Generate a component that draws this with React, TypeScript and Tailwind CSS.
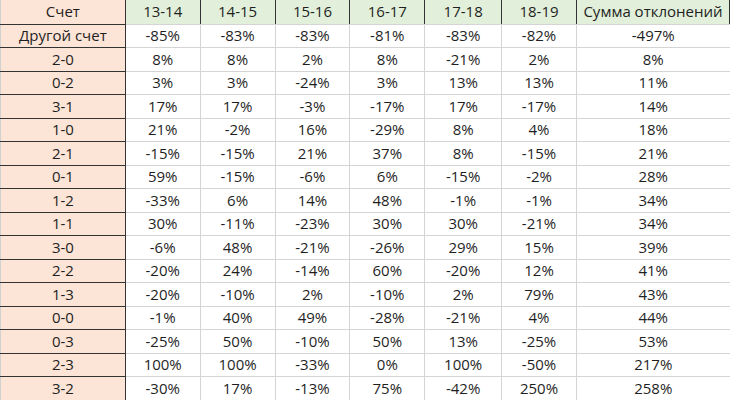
import React from "react";

const seasons = ["13-14", "14-15", "15-16", "16-17", "17-18", "18-19"];

const rows: [string, string[], string][] = [
  ["Другой счет", ["-85%", "-83%", "-83%", "-81%", "-83%", "-82%"], "-497%"],
  ["2-0", ["8%", "8%", "2%", "8%", "-21%", "2%"], "8%"],
  ["0-2", ["3%", "3%", "-24%", "3%", "13%", "13%"], "11%"],
  ["3-1", ["17%", "17%", "-3%", "-17%", "17%", "-17%"], "14%"],
  ["1-0", ["21%", "-2%", "16%", "-29%", "8%", "4%"], "18%"],
  ["2-1", ["-15%", "-15%", "21%", "37%", "8%", "-15%"], "21%"],
  ["0-1", ["59%", "-15%", "-6%", "6%", "-15%", "-2%"], "28%"],
  ["1-2", ["-33%", "6%", "14%", "48%", "-1%", "-1%"], "34%"],
  ["1-1", ["30%", "-11%", "-23%", "30%", "30%", "-21%"], "34%"],
  ["3-0", ["-6%", "48%", "-21%", "-26%", "29%", "15%"], "39%"],
  ["2-2", ["-20%", "24%", "-14%", "60%", "-20%", "12%"], "41%"],
  ["1-3", ["-20%", "-10%", "2%", "-10%", "2%", "79%"], "43%"],
  ["0-0", ["-1%", "40%", "49%", "-28%", "-21%", "4%"], "44%"],
  ["0-3", ["-25%", "50%", "-10%", "50%", "13%", "-25%"], "53%"],
  ["2-3", ["100%", "100%", "-33%", "0%", "100%", "-50%"], "217%"],
  ["3-2", ["-30%", "17%", "-13%", "75%", "-42%", "250%"], "258%"],
];

const widths = ["w-[125px]", "w-[75px]", "w-[75px]", "w-[75px]", "w-[75px]", "w-[77px]", "w-[75px]", "w-[153px]"];

export default function App() {
  return (
    <div className="w-[730px] h-[400px] overflow-hidden bg-white">
      <table
        className="table-fixed border-collapse text-center text-[15px] text-[#1f1f1f]"
        style={{ fontFamily: '"Open Sans", "Liberation Sans", sans-serif' }}
      >
        <colgroup>
          {widths.map((w, i) => (
            <col key={i} className={w} />
          ))}
        </colgroup>
        <thead>
          <tr className="h-[24px]">
            <th className="font-normal bg-[#fce4d6] border-l border-l-[#d0d0d0] border-r border-r-[#333] border-b border-b-[#333] leading-none">
              Счет
            </th>
            {seasons.map((s) => (
              <th
                key={s}
                className="font-normal bg-[#e2efda] border-r border-r-[#333] border-b border-b-[#d4d4d4] leading-none"
              >
                {s}
              </th>
            ))}
            <th className="font-normal bg-[#e2efda] border-r border-r-[#333] border-b border-b-[#d4d4d4] leading-none whitespace-nowrap">
              Сумма отклонений
            </th>
          </tr>
        </thead>
        <tbody>
          {rows.map(([label, vals, sum]) => (
            <tr key={label} className="h-[23.5px]">
              <td className="bg-[#fce4d6] border-l border-l-[#d0d0d0] border-r border-r-[#333] border-b border-b-[#333] leading-none">
                {label}
              </td>
              {vals.map((v, i) => (
                <td key={i} className="border-r border-r-[#d4d4d4] border-b border-b-[#d4d4d4] leading-none">
                  {v}
                </td>
              ))}
              <td className="border-b border-b-[#d4d4d4] leading-none">{sum}</td>
            </tr>
          ))}
        </tbody>
      </table>
    </div>
  );
}
